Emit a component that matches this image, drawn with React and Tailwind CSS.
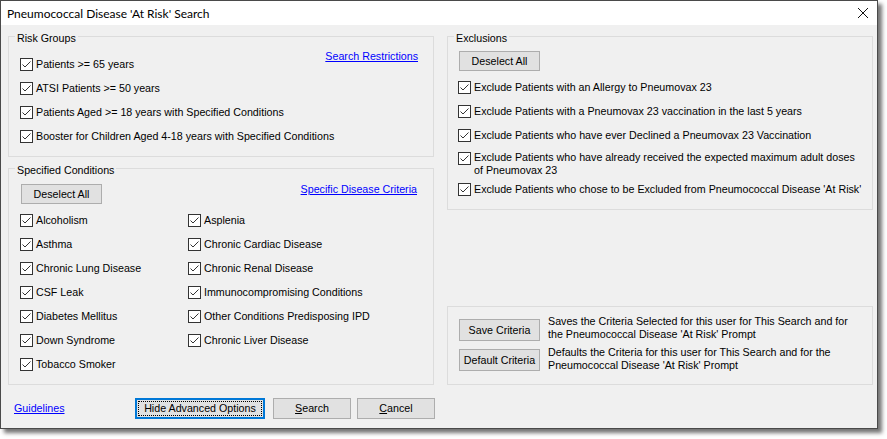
import React from "react";

function Check() {
  return (
    <svg width="13" height="13" viewBox="0 0 13 13" className="shrink-0">
      <rect x="0.5" y="0.5" width="12" height="12" fill="#ffffff" stroke="#333333" />
      <path d="M2.5 6.5 L5 9 L10.5 3.5" fill="none" stroke="#333333" strokeWidth="1" />
    </svg>
  );
}

function CheckRow({ label }) {
  return (
    <div className="flex h-[24px] items-center gap-[3px] whitespace-nowrap">
      <Check />
      <span>{label}</span>
    </div>
  );
}

function Button({ children, className = "" }) {
  return (
    <button
      type="button"
      className={
        "flex items-center justify-center whitespace-nowrap border border-[#adadad] bg-[#e1e1e1] text-black " +
        className
      }
    >
      {children}
    </button>
  );
}

function Link({ children, className = "" }) {
  return (
    <a className={"cursor-pointer whitespace-nowrap text-[#0000ff] underline " + className}>
      {children}
    </a>
  );
}

// WinForms-style group box: the caption sits on the top border line
function Group({ title, className = "", bodyClass = "", children }) {
  return (
    <fieldset className={"min-w-0 border border-[#dcdcdc] " + className}>
      <legend className="ml-[6px] px-[2px] pt-[4px] leading-[13px]">{title}</legend>
      <div className={bodyClass}>{children}</div>
    </fieldset>
  );
}

const riskGroups = [
  "Patients >= 65 years",
  "ATSI Patients >= 50 years",
  "Patients Aged >= 18 years with Specified Conditions",
  "Booster for Children Aged 4-18 years with Specified Conditions",
];

const conditionsLeft = [
  "Alcoholism",
  "Asthma",
  "Chronic Lung Disease",
  "CSF Leak",
  "Diabetes Mellitus",
  "Down Syndrome",
  "Tobacco Smoker",
];

const conditionsRight = [
  "Asplenia",
  "Chronic Cardiac Disease",
  "Chronic Renal Disease",
  "Immunocompromising Conditions",
  "Other Conditions Predisposing IPD",
  "Chronic Liver Disease",
];

export default function App() {
  return (
    <div className="min-h-screen bg-white text-[10.7px] leading-[13px] text-black [font-family:'Liberation_Sans',Arial,sans-serif]">
      <div className="flex h-[429px] w-[878px] flex-col border border-[#4a4a4a] shadow-[4px_4px_4px_rgba(0,0,0,0.55)]">
        {/* title bar */}
        <div className="flex h-[24px] items-center justify-between bg-white pl-[6px] pr-[8px]">
          <span className="text-[12px] [font-family:'Lato',sans-serif]">
            Pneumococcal Disease 'At Risk' Search
          </span>
          <svg width="12" height="12" viewBox="0 0 12 12">
            <path d="M1 1 L11 11 M11 1 L1 11" stroke="#111" strokeWidth="1" />
          </svg>
        </div>

        {/* dialog body */}
        <div className="flex flex-1 flex-col bg-[#f0f0f0] pl-[7px] pr-[4px] pt-[3px]">
          <div className="flex h-[357px] gap-[13px]">
            {/* left column */}
            <div className="flex w-[426px] flex-col gap-[3px]">
              <Group title="Risk Groups" bodyClass="pb-[8px] pl-[11px] pt-[7px]">
                <div className="flex items-start justify-between">
                  <div className="flex min-w-0 flex-col">
                    {riskGroups.map((r) => (
                      <CheckRow key={r} label={r} />
                    ))}
                  </div>
                  <Link className="-mt-[2px] mr-[15px] shrink-0">Search Restrictions</Link>
                </div>
              </Group>

              <Group
                title="Specified Conditions"
                className="flex-1"
                bodyClass="pb-[8px] pl-[12px] pt-[7px]"
              >
                <div className="flex items-start justify-between">
                  <Button className="h-[20px] w-[81px]">Deselect All</Button>
                  <Link className="-mt-[1px] mr-[16px]">Specific Disease Criteria</Link>
                </div>
                <div className="mt-[4px] grid grid-cols-[168px_1fr]">
                  <div className="-ml-[1px] flex flex-col">
                    {conditionsLeft.map((c) => (
                      <CheckRow key={c} label={c} />
                    ))}
                  </div>
                  <div className="-ml-[1px] flex flex-col">
                    {conditionsRight.map((c) => (
                      <CheckRow key={c} label={c} />
                    ))}
                  </div>
                </div>
              </Group>
            </div>

            {/* right column */}
            <div className="flex w-[426px] flex-col">
              <Group title="Exclusions" bodyClass="pb-[8px] pl-[10px] pt-[6px]">
                <Button className="ml-[1px] h-[20px] w-[81px]">Deselect All</Button>
                <div className="mt-[4px] flex flex-col">
                  <CheckRow label="Exclude Patients with an Allergy to Pneumovax 23" />
                  <CheckRow label="Exclude Patients with a Pneumovax 23 vaccination in the last 5 years" />
                  <CheckRow label="Exclude Patients who have ever Declined a Pneumovax 23 Vaccination" />
                  <div className="flex h-[30px] items-start gap-[3px] pt-[5px]">
                    <Check />
                    <span className="-mt-[1px]">
                      Exclude Patients who have already received the expected maximum adult doses
                      <br />
                      of Pneumovax 23
                    </span>
                  </div>
                  <CheckRow label="Exclude Patients who chose to be Excluded from Pneumococcal Disease 'At Risk'" />
                </div>
              </Group>

              <div className="mt-auto flex flex-col gap-[8px] border border-[#dcdcdc] pb-[12px] pl-[11px] pt-[12px]">
                <div className="flex items-start gap-[8px]">
                  <Button className="h-[22px] w-[81px] shrink-0">Save Criteria</Button>
                  <span className="-mt-[4px]">
                    Saves the Criteria Selected for this user for This Search and for
                    <br />
                    the Pneumococcal Disease 'At Risk' Prompt
                  </span>
                </div>
                <div className="flex items-start gap-[8px]">
                  <Button className="h-[22px] w-[81px] shrink-0">Default Criteria</Button>
                  <span className="-mt-[3px]">
                    Defaults the Criteria for this user for This Search and for the
                    <br />
                    Pneumococcal Disease 'At Risk' Prompt
                  </span>
                </div>
              </div>
            </div>
          </div>

          {/* footer buttons */}
          <div className="mt-[13px] flex h-[21px] items-center">
            <div className="w-[127px] pl-[6px]">
              <Link>Guidelines</Link>
            </div>
            <button
              type="button"
              className="relative flex h-[21px] w-[130px] items-center justify-center border-2 border-[#0078d7] bg-[#e1e1e1]"
            >
              <span className="absolute inset-[1px] border border-dotted border-black" />
              Hide Advanced Options
            </button>
            <Button className="ml-[8px] h-[21px] w-[78px]">
              <span>
                <span className="underline">S</span>earch
              </span>
            </Button>
            <Button className="ml-[6px] h-[21px] w-[78px]">
              <span>
                <span className="underline">C</span>ancel
              </span>
            </Button>
          </div>
        </div>
      </div>
    </div>
  );
}
